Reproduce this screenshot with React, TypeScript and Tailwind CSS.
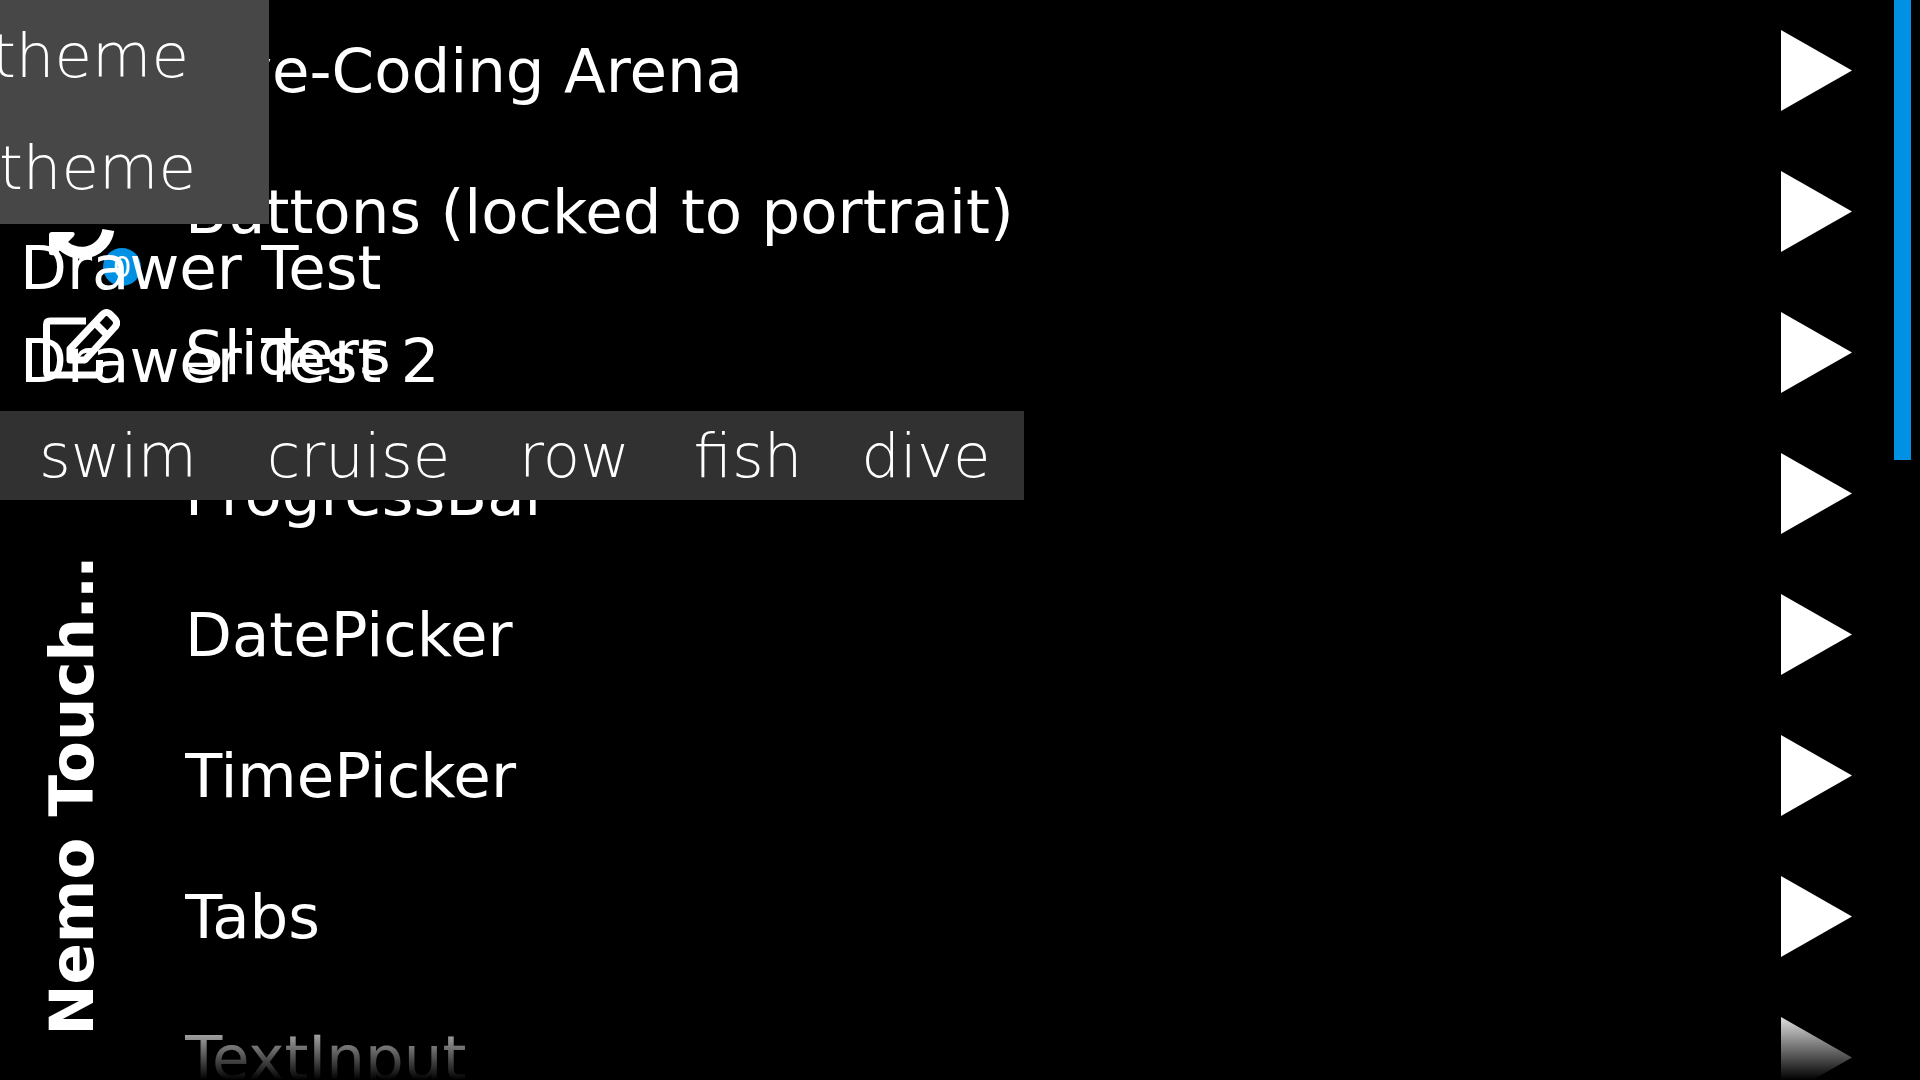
const pages = [
  "Live-Coding Arena",
  "Buttons (locked to portrait)",
  "Sliders",
  "ProgressBar",
  "DatePicker",
  "TimePicker",
  "Tabs",
  "TextInput",
];

function RefreshIcon() {
  return (
    <svg className="h-20 w-20" viewBox="0 0 80 80" fill="none" aria-hidden="true">
      <path d="M68.300 38A27 27 0 0 1 20 50" stroke="white" strokeWidth="12" />
      <path d="M9 43q0-3 3-3h20q4 0 2 4l-6 6-7 7-5 6q-7 1-7-2z" fill="white" />
    </svg>
  );
}

function EditIcon() {
  return (
    <svg className="h-20 w-20" viewBox="0 0 80 80" fill="none" stroke="white" strokeWidth="7" aria-hidden="true">
      <path d="M46 17H10q-3.500 0-3.500 3.500v47q0 3.500 3.500 3.500h46q3.500 0 3.500-3.500V56" />
      <path d="M30 56V45L62 11q4.500-5 9 0l3.500 3.500q4.500 4.500 0 9L45 56z" strokeLinejoin="round" />
      <path d="M55 19l13 13" />
    </svg>
  );
}

function Sidebar() {
  return (
    <header className="flex w-[185px] shrink-0 flex-col items-start justify-between pb-[44px] pl-9 pt-48">
      <div className="flex flex-col gap-8 pl-1">
        <button className="relative h-20 w-20" aria-label="Refresh">
          <RefreshIcon />
          <span className="absolute left-[63px] top-[56px] flex size-[38px] items-center justify-center rounded-full bg-[#0091e5] text-[29px]">
            0
          </span>
        </button>
        <button className="h-20 w-20" aria-label="Edit">
          <EditIcon />
        </button>
      </div>
      <h1 className="rotate-180 whitespace-nowrap font-bold [writing-mode:vertical-rl]">Nemo Touch…</h1>
    </header>
  );
}

function PageList() {
  return (
    <main className="relative min-w-0 flex-1 overflow-hidden">
      <ul>
        {pages.map((page) => (
          <li key={page}>
            <button className="flex h-[141px] w-full items-center justify-between pr-[42px] text-left">
              {page}
              <svg className="h-[81px] w-[71px]" viewBox="0 0 71 81" aria-hidden="true">
                <path d="M0 0L71 40.500L0 81z" fill="white" />
              </svg>
            </button>
          </li>
        ))}
      </ul>
      <div className="pointer-events-none absolute inset-x-0 bottom-0 h-[72px] bg-linear-to-b from-transparent to-black" />
    </main>
  );
}

export default function App() {
  return (
    <div className="relative flex h-screen overflow-hidden bg-black font-['DejaVu_Sans',sans-serif] text-[61px] leading-[71px] text-white">
      <Sidebar />
      <PageList />
      <div className="flex w-[26px] shrink-0">
        <div className="h-[460px] w-[17px] bg-[#0091e5]" />
      </div>

      <nav className="absolute left-0 top-[221px] flex flex-col pl-5">
        <a href="#drawer-test" className="flex h-[93px] items-center">Drawer Test</a>
        <a href="#drawer-test-2" className="flex h-[93px] items-center">Drawer Test 2</a>
      </nav>

      <div className="absolute left-0 top-0 flex w-[269px] flex-col bg-[#474747] font-extralight">
        <button className="flex h-28 items-center justify-end pb-0.5 pr-[80px]">theme</button>
        <button className="flex h-28 items-center justify-end pb-0.5 pr-[73px]">theme</button>
      </div>

      <div className="absolute left-0 top-[411px] grid h-[89px] grid-cols-[236px_245px_187px_160px_196px] bg-[#313131] font-extralight">
        <button>swim</button>
        <button>cruise</button>
        <button>row</button>
        <button>fish</button>
        <button>dive</button>
      </div>
    </div>
  );
}
